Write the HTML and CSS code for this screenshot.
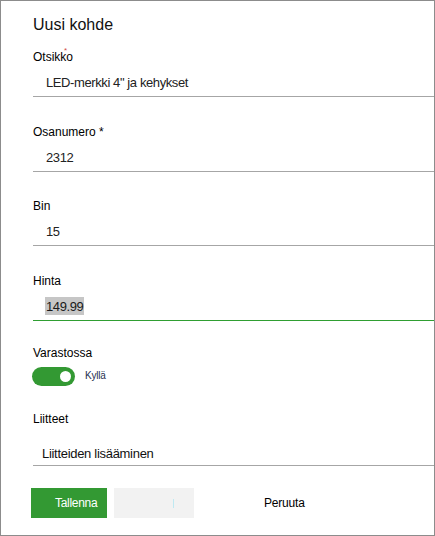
FILE: index.html
```html
<!DOCTYPE html>
<html lang="fi">
<head>
<meta charset="utf-8">
<title>Uusi kohde</title>
<link rel="stylesheet" href="styles.css">
</head>
<body>
<div class="panel">
  <h1 class="title">Uusi kohde</h1>

  <div class="field">
    <div class="label">Otsikko<span class="req-mark">*</span></div>
    <div class="value">LED-merkki 4" ja kehykset</div>
  </div>

  <div class="field">
    <div class="label">Osanumero *</div>
    <div class="value">2312</div>
  </div>

  <div class="field">
    <div class="label">Bin</div>
    <div class="value">15</div>
  </div>

  <div class="field field-active">
    <div class="label">Hinta</div>
    <div class="value"><span class="selected">149.99</span></div>
  </div>

  <div class="toggle-field">
    <div class="label">Varastossa</div>
    <div class="toggle-row">
      <div class="toggle"><span class="knob"></span></div>
      <span class="toggle-text">Kyllä</span>
    </div>
  </div>

  <div class="attach-field">
    <div class="label">Liitteet</div>
    <div class="attach-value">Liitteiden lisääminen</div>
  </div>

  <div class="actions">
    <button class="btn btn-primary">Tallenna</button>
    <button class="btn btn-secondary"><span class="caret"></span></button>
    <button class="btn btn-link">Peruuta</button>
  </div>
</div>
</body>
</html>
```

FILE: styles.css
```css
html, body {
  margin: 0;
  padding: 0;
  background: #ffffff;
}

body {
  font-family: "Liberation Sans", Arial, sans-serif;
  color: #222222;
}

.panel {
  width: 435px;
  height: 536px;
  box-sizing: border-box;
  border: 1px solid #8c8c8c;
  padding: 14px 0 0 32px;
  background: #ffffff;
  overflow: hidden;
}

.title {
  margin: 0 0 15px 0;
  font-size: 16px;
  line-height: 20px;
  font-weight: normal;
  color: #111111;
}

.label {
  position: relative;
  font-size: 12px;
  line-height: 14px;
  color: #000000;
  height: 14px;
}

.req-mark {
  position: absolute;
  left: 31px;
  top: -3px;
  font-size: 8px;
  line-height: 8px;
  color: #d24a4a;
}

.field {
  margin-bottom: 27.5px;
}

.field-active {
  margin-bottom: 25px;
}

.value {
  margin-top: 11px;
  padding: 0 0 5px 13px;
  font-size: 13px;
  line-height: 16px;
  letter-spacing: -0.4px;
  color: #222222;
  border-bottom: 1px solid #a6a6a6;
}

.field-active .value {
  border-bottom-color: #2f9e32;
}

.selected {
  background: #c6c6c6;
  padding: 2px 1px 1px 1px;
  margin-left: -1px;
  color: #1a1a1a;
}

.toggle-row {
  display: flex;
  align-items: center;
  margin-top: 7px;
  margin-left: -1px;
  gap: 10px;
}

.toggle {
  width: 43px;
  height: 19px;
  border-radius: 10px;
  background: #339933;
  display: flex;
  align-items: center;
  justify-content: flex-end;
  padding-right: 4px;
  box-sizing: border-box;
}

.knob {
  width: 11px;
  height: 11px;
  border-radius: 50%;
  background: #ffffff;
}

.toggle-text {
  font-size: 10px;
  line-height: 12px;
  color: #1f2f4f;
  letter-spacing: -0.2px;
}

.attach-field {
  margin-top: 26px;
}

.attach-value {
  margin-top: 20px;
  padding: 0 0 3px 9px;
  font-size: 13px;
  line-height: 16px;
  letter-spacing: -0.3px;
  color: #111111;
  border-bottom: 1px solid #a6a6a6;
}

.actions {
  display: flex;
  align-items: center;
  margin-top: 22px;
  margin-left: -2px;
  gap: 7px;
}

.btn {
  font-family: "Liberation Sans", Arial, sans-serif;
  font-size: 12px;
  line-height: 14px;
  height: 30px;
  border: none;
  margin: 0;
  padding: 0;
  cursor: pointer;
}

.btn-primary {
  width: 76px;
  background: #339933;
  color: #ffffff;
  text-align: left;
  padding-left: 24px;
  letter-spacing: -0.3px;
}

.btn-secondary {
  width: 80px;
  background: #f2f2f2;
  position: relative;
}

.caret {
  position: absolute;
  left: 59px;
  top: 11px;
  width: 1px;
  height: 9px;
  background: #bfe9f2;
}

.btn-link {
  background: transparent;
  color: #000000;
  margin-left: 63px;
  letter-spacing: -0.2px;
}
```
